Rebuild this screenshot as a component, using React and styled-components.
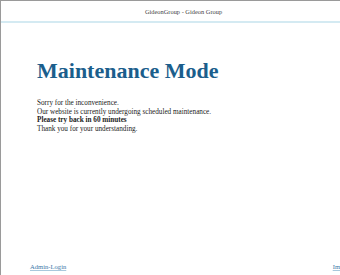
import React from "react";
import styled, { createGlobalStyle } from "styled-components";

const Global = createGlobalStyle`
  html, body { margin: 0; padding: 0; background: #fff; }
  body { font-family: "Liberation Serif", "Times New Roman", serif; color: #222; }
`;

const Page = styled.div`
  width: 340px;
  height: 275px;
  box-sizing: border-box;
  border-top: 1px solid #9a9a9a;
  border-left: 1px solid #9a9a9a;
  display: flex;
  flex-direction: column;
  overflow: hidden;
`;

const Header = styled.header`
  height: 20px;
  border-bottom: 2px solid #d4eaf2;
  display: flex;
  align-items: center;
  justify-content: center;
  padding-left: 26px;
  font-size: 6.4px;
  color: #444;
`;

const Main = styled.main`
  flex: 1;
  padding: 36px 0 0 36px;
`;

const Title = styled.h1`
  margin: 0 0 16px;
  font-size: 22px;
  font-weight: bold;
  color: #1b5e8c;
  line-height: 24px;
`;

const Text = styled.p`
  margin: 0;
  font-size: 7.2px;
  line-height: 8.7px;
  color: #222;
  font-weight: ${(p) => (p.$bold ? "bold" : "normal")};
`;

const Footer = styled.footer`
  height: 12px;
  display: flex;
  justify-content: space-between;
  align-items: flex-start;
  padding-left: 29px;
  margin-right: -22px;
`;

const FooterLink = styled.a`
  font-size: 6.6px;
  color: #3a78a8;
  text-decoration: underline;
  text-decoration-color: #a8c8dc;
`;

export default function App() {
  return (
    <>
      <Global />
      <Page>
        <Header>GideonGroup - Gideon Group</Header>
        <Main>
          <Title>Maintenance Mode</Title>
          <Text>Sorry for the inconvenience.</Text>
          <Text>Our website is currently undergoing scheduled maintenance.</Text>
          <Text $bold>Please try back in 60 minutes</Text>
          <Text>Thank you for your understanding.</Text>
        </Main>
        <Footer>
          <FooterLink href="#">Admin-Login</FooterLink>
          <FooterLink href="#">Impressum</FooterLink>
        </Footer>
      </Page>
    </>
  );
}
